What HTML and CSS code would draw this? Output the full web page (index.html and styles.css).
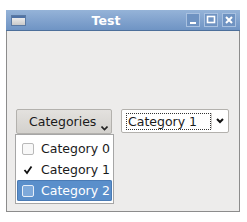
FILE: index.html
```html
<!DOCTYPE html>
<html>
<head>
<meta charset="utf-8">
<link rel="stylesheet" href="styles.css">
</head>
<body>
<div class="window">
  <div class="titlebar">
    <div class="app-icon"><div class="app-icon-bar"></div></div>
    <div class="title">Test</div>
    <div class="wm-buttons">
      <div class="wm-btn"><svg width="14" height="14" viewBox="0 0 14 14"><rect x="4" y="9" width="6" height="2" fill="#fff"/></svg></div>
      <div class="wm-btn"><svg width="14" height="14" viewBox="0 0 14 14"><rect x="3.5" y="3.5" width="7" height="6" fill="none" stroke="#fff" stroke-width="1.6"/></svg></div>
      <div class="wm-btn"><svg width="14" height="14" viewBox="0 0 14 14"><path d="M4 4 L10 10 M10 4 L4 10" stroke="#fff" stroke-width="2"/></svg></div>
    </div>
  </div>
  <div class="client">
    <div class="controls">
      <div class="menu-wrap">
        <div class="cat-button">Categories<svg class="chev" width="7" height="5" viewBox="0 0 7 5"><path d="M0.5 0.5 L3.5 3.5 L6.5 0.5" fill="none" stroke="#222" stroke-width="1.6"/></svg></div>
        <div class="popup">
          <div class="item"><span class="check"></span><span>Category 0</span></div>
          <div class="item"><span class="check"><svg width="12" height="12" viewBox="0 0 12 12"><path d="M2.5 6 L5 9 L9.5 2.5" fill="none" stroke="#111" stroke-width="1.8"/></svg></span><span>Category 1</span></div>
          <div class="item selected"><span class="check"></span><span>Category 2</span></div>
        </div>
      </div>
      <div class="combo">
        <div class="combo-text"><span class="focus">Category 1</span></div>
        <div class="combo-sep"></div>
        <div class="combo-arrow"><svg width="8" height="6" viewBox="0 0 8 6"><path d="M1 1 L4 4 L7 1" fill="none" stroke="#111" stroke-width="2"/></svg></div>
      </div>
    </div>
  </div>
</div>
</body>
</html>
```
FILE: styles.css
```css
html, body {
  margin: 0;
  padding: 0;
  background: #ffffff;
  font-family: "DejaVu Sans", sans-serif;
  font-size: 12.5px;
  color: #1a1a1a;
}
.window {
  margin: 10px 0 0 6px;
  width: 234px;
  height: 202px;
  box-sizing: border-box;
  border: 1px solid #8c8c8c;
  border-top: none;
  background: #edeceb;
  display: flex;
  flex-direction: column;
}
.titlebar {
  height: 21px;
  margin: 0 -1px;
  background: linear-gradient(#95b3d8, #6f94c4);
  border-bottom: 1px solid #4d6f9a;
  display: flex;
  align-items: center;
  box-sizing: border-box;
}
.app-icon {
  width: 15px;
  height: 11px;
  margin-left: 5px;
  border: 1px solid #5b7aa3;
  background: linear-gradient(#f6f6f6, #c9c9c9);
  box-sizing: border-box;
}
.app-icon-bar {
  height: 2px;
  background: #4f72a5;
}
.title {
  flex: 1;
  text-align: center;
  color: #ffffff;
  font-weight: bold;
  font-size: 12.5px;
}
.wm-buttons {
  display: flex;
  gap: 4px;
  margin-right: 4px;
}
.wm-btn {
  width: 14px;
  height: 14px;
  box-sizing: border-box;
  border: 1px solid #a9c1e0;
  background: #6f93c2;
  display: flex;
  align-items: center;
  justify-content: center;
}
.wm-btn svg {
  display: block;
  margin: -1px;
}
.client {
  flex: 1;
  padding: 78px 0 0 9px;
}
.controls {
  display: flex;
  align-items: flex-start;
  gap: 9px;
}
.menu-wrap {
  position: relative;
}
.cat-button {
  width: 96px;
  height: 25px;
  box-sizing: border-box;
  border: 1px solid #b3b1ad;
  border-radius: 2px;
  background: linear-gradient(#e3e1de, #d3d1cd);
  display: flex;
  align-items: center;
  padding-left: 12px;
  position: relative;
}
.chev {
  position: absolute;
  left: 84px;
  top: 16px;
}
.popup {
  position: absolute;
  left: -1px;
  top: 25px;
  width: 99px;
  box-sizing: border-box;
  border: 1px solid #a6a6a6;
  background: #ffffff;
  padding: 3px 1px 2px 1px;
}
.item {
  height: 21px;
  display: flex;
  align-items: center;
  padding-left: 5px;
  gap: 7px;
}
.item.selected {
  background: #5a8fcb;
  color: #ffffff;
  border-radius: 2px;
  box-shadow: inset 0 0 0 1px #4a7bb5;
}
.check {
  width: 12px;
  height: 12px;
  box-sizing: border-box;
  border: 1px solid #b9b9b9;
  border-radius: 2px;
  background: #f8f8f8;
  display: flex;
  align-items: center;
  justify-content: center;
}
.check svg {
  margin: -1px;
}
.item:nth-child(2) .check {
  border-color: transparent;
  background: transparent;
}
.item.selected .check {
  background: #7ea9da;
  border-color: #e6eef8;
}
.combo {
  width: 108px;
  height: 24px;
  box-sizing: border-box;
  border: 1px solid #b3b1ad;
  border-radius: 2px;
  background: #ffffff;
  display: flex;
  align-items: stretch;
}
.combo-text {
  flex: 1;
  padding: 3px 0 0 4px;
}
.focus {
  display: block;
  border: 1px dotted #333;
  height: 17px;
  box-sizing: border-box;
  padding-left: 1px;
  line-height: 15px;
}
.combo-sep {
  width: 1px;
  background: #cfcdca;
  margin: 3px 0;
}
.combo-arrow {
  width: 16px;
  display: flex;
  align-items: center;
  justify-content: center;
}
```
